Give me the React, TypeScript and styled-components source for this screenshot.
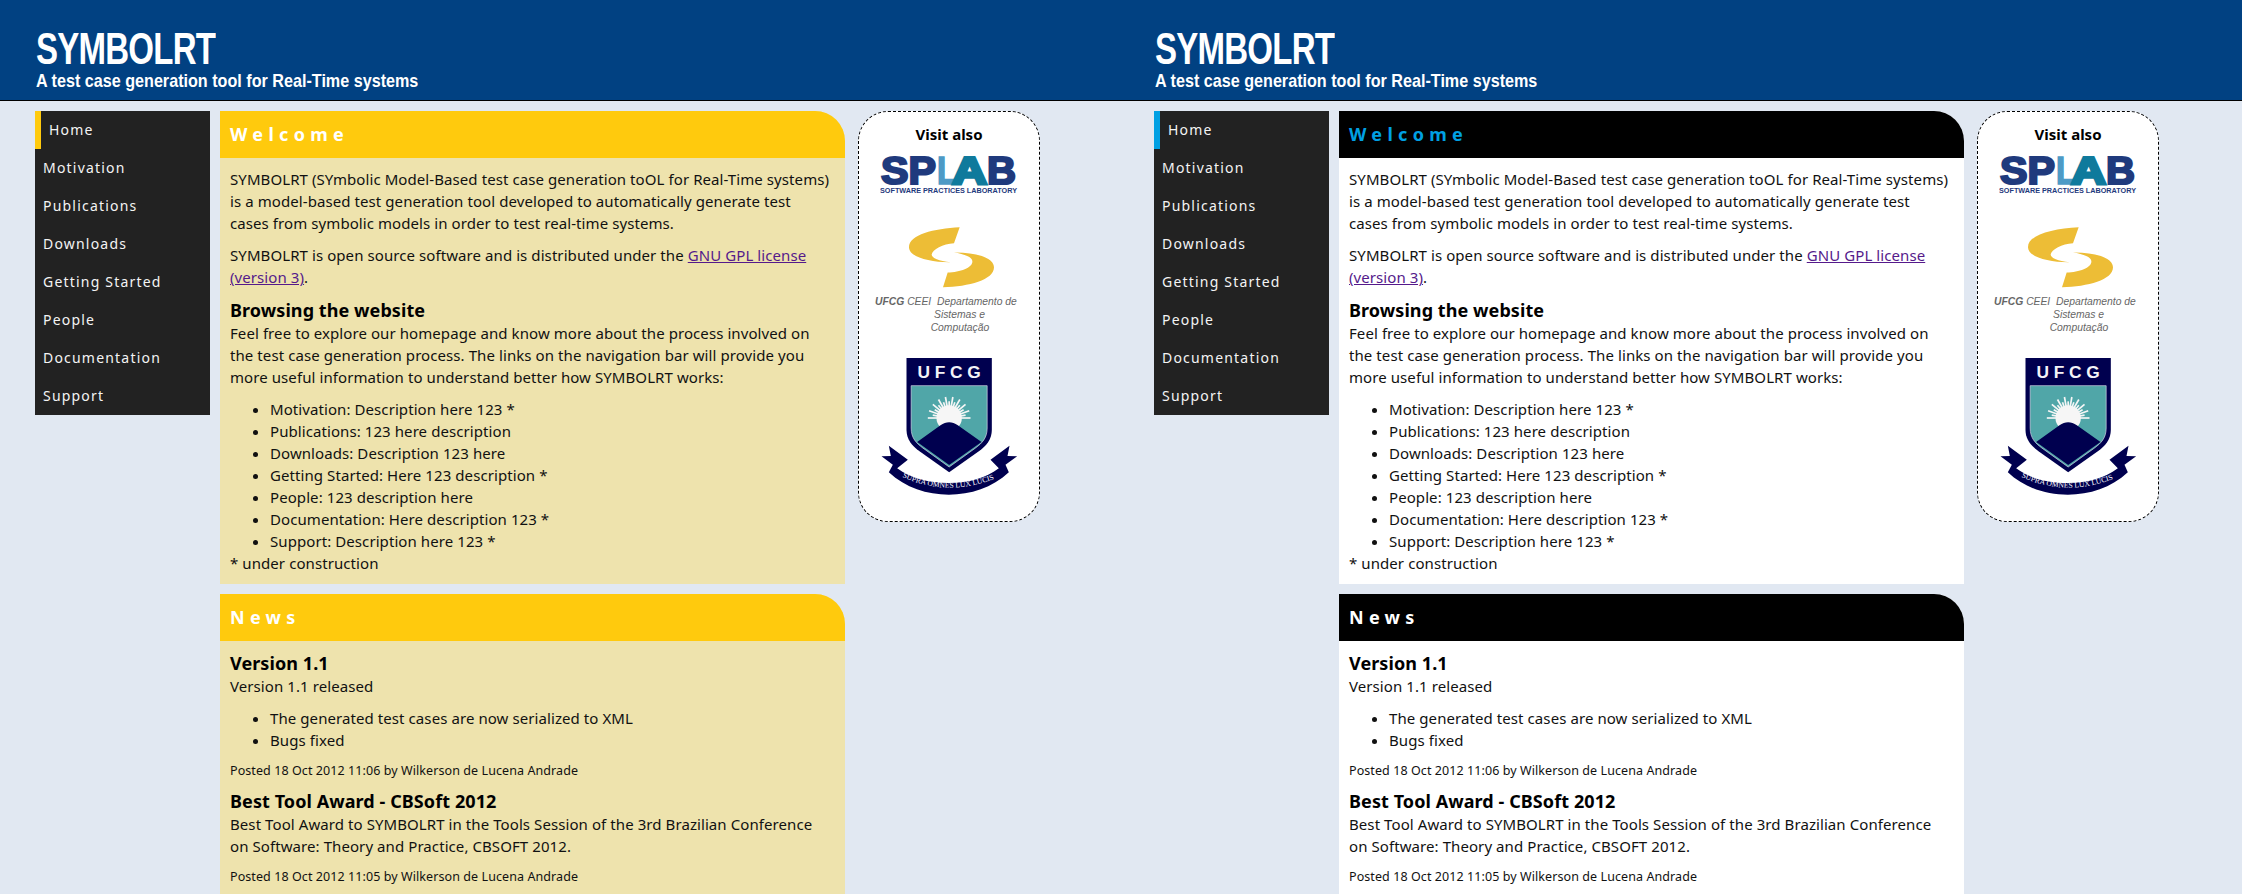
import React, { useId } from "react";
import styled, { createGlobalStyle } from "styled-components";

type Scheme = {
  accent: string;
  headBg: string;
  welcomeColor: string;
  panelBg: string;
};

const yellowScheme: Scheme = {
  accent: "#ffca0d",
  headBg: "#ffca0d",
  welcomeColor: "#ffffff",
  panelBg: "#eee3ad",
};

const blackScheme: Scheme = {
  accent: "#00a0e3",
  headBg: "#000000",
  welcomeColor: "#00a0e3",
  panelBg: "#ffffff",
};

const NAV_ITEMS = [
  "Home",
  "Motivation",
  "Publications",
  "Downloads",
  "Getting Started",
  "People",
  "Documentation",
  "Support",
];

const SECTIONS = [
  "Motivation: Description here 123 *",
  "Publications: 123 here description",
  "Downloads: Description 123 here",
  "Getting Started: Here 123 description *",
  "People: 123 description here",
  "Documentation: Here description 123 *",
  "Support: Description here 123 *",
];

const SplabLetters = ({
  x,
  width,
  color,
  weight,
  children,
}: {
  x: number;
  width: number;
  color: string;
  weight: number;
  children: React.ReactNode;
}) => (
  <text
    x={x}
    y={28}
    textLength={width}
    lengthAdjust="spacingAndGlyphs"
    fontFamily="'Liberation Sans', sans-serif"
    fontWeight={700}
    fontSize={38}
    fill={color}
    stroke={color}
    strokeWidth={weight}
  >
    {children}
  </text>
);

const SplabLogo = () => (
  <LogoSvg width={138} height={38} viewBox="0 0 138 38">
    <SplabLetters x={1} width={55} color="#1f3a7d" weight={2.2}>SP</SplabLetters>
    <SplabLetters x={57} width={20} color="#4d9ac6" weight={1.6}>L</SplabLetters>
    <SplabLetters x={72} width={35} color="#0f7a9c" weight={3}>A</SplabLetters>
    <SplabLetters x={107} width={29} color="#1f3a7d" weight={2.2}>B</SplabLetters>
    <text
      x={0}
      y={37}
      textLength={137}
      lengthAdjust="spacingAndGlyphs"
      fontFamily="'Liberation Sans', sans-serif"
      fontWeight={700}
      fontSize={8}
      fill="#1f3a7d"
    >
      SOFTWARE PRACTICES LABORATORY
    </text>
  </LogoSvg>
);

const CeeiLogo = () => (
  <CeeiSvg width={150} height={107} viewBox="105 380 450 320">
    <path
      d="M362 380C285 384 210 402 210 440C210 470 275 486 335 485C300 482 278 472 278 462C280 447 312 430 345 428Z"
      fill="#edbd36"
    />
    <path
      d="M312 560C390 558 465 538 465 500C465 472 410 455 345 456C375 460 400 470 400 482C402 500 365 515 326 516Z"
      fill="#edbd36"
    />
    <CeeiText x={108} y={612}>
      <tspan fontWeight={700}>UFCG</tspan> CEEI{"  "}Departamento de
    </CeeiText>
    <CeeiText x={285} y={652}>Sistemas e</CeeiText>
    <CeeiText x={275} y={692}>Computação</CeeiText>
  </CeeiSvg>
);

const CeeiText = styled.text`
  font-family: "Liberation Sans", sans-serif;
  font-style: italic;
  font-size: 31px;
  fill: #666;
  white-space: pre;
`;

const SUN_RAYS = Array.from({ length: 19 }, (_, i) => -180 + i * 10);

const UfcgShield = () => {
  const curveId = useId();
  return (
    <ShieldSvg width={137} height={138} viewBox="117 55 410 414">
      <path
        d="M193 55H449V270C449 300 432 318 410 335L321 398L232 335C210 318 193 300 193 270Z"
        fill="#00004f"
      />
      <path
        d="M207 138H435V265C435 295 420 310 400 325L321 382L242 325C222 310 207 295 207 265Z"
        fill="#50a6a8"
        stroke="#d8d8e8"
        strokeWidth={2}
      />
      {SUN_RAYS.map((deg) => {
        const rad = (deg * Math.PI) / 180;
        const len = deg % 20 === 0 ? 64 : 50;
        return (
          <line
            key={deg}
            x1={321}
            y1={235}
            x2={321 + Math.cos(rad) * len}
            y2={235 + Math.sin(rad) * len}
            stroke="#f6f6f6"
            strokeWidth={5}
          />
        );
      })}
      <circle cx={321} cy={235} r={38} fill="#f6f6f6" />
      <path
        d="M225 307L295 257C312 245 330 245 347 257L418 307L321 376Z"
        fill="#00004f"
      />
      <text
        x={226}
        y={115}
        textLength={190}
        fontFamily="'Liberation Sans', sans-serif"
        fontWeight={700}
        fontSize={52}
        fill="#f4f4f8"
      >
        UFCG
      </text>
      <path
        d="M118 350L146 349L140 318L197 360L165 386C205 416 260 430 320 430C380 430 430 416 470 386L445 360L502 318L496 349L525 350L490 375L500 398C450 445 385 465 320 465C255 465 190 445 140 398L152 375Z"
        fill="#00004f"
      />
      <path id={curveId} d="M180 412Q320 476 472 412" fill="none" />
      <text fontFamily="'Liberation Serif', serif" fontSize={23} fill="#ffffff">
        <textPath href={`#${curveId}`}>SUPRA OMNES LUX LUCIS</textPath>
      </text>
    </ShieldSvg>
  );
};

const Site = ({ scheme, width }: { scheme: Scheme; width: number }) => (
  <SiteColumn $width={width}>
    <Banner>
      <Title>SYMBOLRT</Title>
      <Tagline>A test case generation tool for Real-Time systems</Tagline>
    </Banner>
    <Main>
      <Nav>
        {NAV_ITEMS.map((item, i) => (
          <NavItem key={item} $active={i === 0} $accent={scheme.accent}>
            {item}
          </NavItem>
        ))}
      </Nav>
      <Content>
        <Panel $bg={scheme.panelBg}>
          <PanelHead $bg={scheme.headBg} $color={scheme.welcomeColor}>Welcome</PanelHead>
          <PanelBody>
            <Para>
              SYMBOLRT (SYmbolic Model-Based test case generation toOL for Real-Time systems)
              <br />
              is a model-based test generation tool developed to automatically generate test
              <br />
              cases from symbolic models in order to test real-time systems.
            </Para>
            <Para>
              SYMBOLRT is open source software and is distributed under the{" "}
              <TextLink href="#">
                GNU GPL license
                <br />
                (version 3)
              </TextLink>
              .
            </Para>
            <SubHead>Browsing the website</SubHead>
            <PlainText>
              Feel free to explore our homepage and know more about the process involved on
              <br />
              the test case generation process. The links on the navigation bar will provide you
              <br />
              more useful information to understand better how SYMBOLRT works:
            </PlainText>
            <Bullets>
              {SECTIONS.map((s) => (
                <li key={s}>{s}</li>
              ))}
            </Bullets>
            <PlainText>* under construction</PlainText>
          </PanelBody>
        </Panel>
        <Panel $bg={scheme.panelBg}>
          <PanelHead $bg={scheme.headBg} $color="#ffffff">News</PanelHead>
          <PanelBody>
            <SubHead>Version 1.1</SubHead>
            <PlainText>Version 1.1 released</PlainText>
            <Bullets>
              <li>The generated test cases are now serialized to XML</li>
              <li>Bugs fixed</li>
            </Bullets>
            <Posted>Posted 18 Oct 2012 11:06 by Wilkerson de Lucena Andrade</Posted>
            <SubHead>Best Tool Award - CBSoft 2012</SubHead>
            <PlainText>
              Best Tool Award to SYMBOLRT in the Tools Session of the 3rd Brazilian Conference
              <br />
              on Software: Theory and Practice, CBSOFT 2012.
            </PlainText>
            <Posted>Posted 18 Oct 2012 11:05 by Wilkerson de Lucena Andrade</Posted>
          </PanelBody>
        </Panel>
      </Content>
      <VisitBox>
        <VisitTitle>Visit also</VisitTitle>
        <SplabLogo />
        <CeeiLogo />
        <UfcgShield />
      </VisitBox>
    </Main>
  </SiteColumn>
);

export default function App() {
  return (
    <>
      <GlobalStyle />
      <Screen>
        <Site scheme={yellowScheme} width={1119} />
        <Site scheme={blackScheme} width={1123} />
      </Screen>
    </>
  );
}

const GlobalStyle = createGlobalStyle`
  html, body {
    margin: 0;
    padding: 0;
    background: #e1e8f2;
  }
`;

const Screen = styled.div`
  display: flex;
  width: 2242px;
  height: 894px;
  overflow: hidden;
  font-family: "Noto Sans", sans-serif;
  font-size: 15px;
  line-height: 22px;
  color: #111;
`;

const SiteColumn = styled.div<{ $width: number }>`
  flex: none;
  width: ${(p) => p.$width}px;
`;

const Banner = styled.header`
  box-sizing: border-box;
  height: 101px;
  padding: 28px 0 0 36px;
  background: #014182;
  border-bottom: 1px solid #000;
  color: #fff;
  font-family: "Liberation Sans", sans-serif;
  font-weight: 700;
`;

const Title = styled.div`
  font-size: 44px;
  line-height: 42px;
  letter-spacing: -1px;
  transform: scaleX(0.75);
  transform-origin: left;
`;

const Tagline = styled.div`
  margin-top: 1px;
  font-size: 19px;
  line-height: 20px;
  white-space: nowrap;
  transform: scaleX(0.85);
  transform-origin: left;
`;

const Main = styled.div`
  display: flex;
  align-items: flex-start;
  padding: 10px 0 0 35px;
`;

const Nav = styled.nav`
  flex: none;
  width: 175px;
  margin-right: 10px;
  background: #222;
`;

const NavItem = styled.div<{ $active: boolean; $accent: string }>`
  height: 38px;
  padding-left: 8px;
  border-left: ${(p) => (p.$active ? `6px solid ${p.$accent}` : "0")};
  color: #f4f4f4;
  font-size: 14px;
  line-height: 38px;
  letter-spacing: 1.2px;
`;

const Content = styled.div`
  flex: none;
  display: flex;
  flex-direction: column;
  gap: 10px;
  width: 625px;
`;

const Panel = styled.section<{ $bg: string }>`
  background: ${(p) => p.$bg};
  border-top-right-radius: 30px;
`;

const PanelHead = styled.h2<{ $bg: string; $color: string }>`
  height: 47px;
  margin: 0;
  padding-left: 10px;
  background: ${(p) => p.$bg};
  border-top-right-radius: 30px;
  color: ${(p) => p.$color};
  font-size: 18px;
  font-weight: 700;
  line-height: 47px;
  letter-spacing: 5.3px;
`;

const PanelBody = styled.div`
  padding: 10px 5px 10px 10px;
  letter-spacing: 0.08px;
`;

const Para = styled.p`
  margin: 0 0 10px;
`;

const PlainText = styled.div``;

const TextLink = styled.a`
  color: #551a8b;
`;

const SubHead = styled.h3`
  margin: 0;
  font-size: 18px;
  font-weight: 700;
  line-height: 24px;
  color: #000;
`;

const Bullets = styled.ul`
  margin: 10px 0 0;
  padding-left: 40px;
`;

const Posted = styled.div`
  margin: 10px 0 8px;
  font-size: 12.5px;
  line-height: 20px;
`;

const VisitBox = styled.aside`
  flex: none;
  box-sizing: border-box;
  display: flex;
  flex-direction: column;
  align-items: center;
  width: 182px;
  height: 411px;
  margin-left: 13px;
  padding-top: 11px;
  background: #fff;
  border: 1px dashed #000;
  border-radius: 30px;
`;

const VisitTitle = styled.div`
  font-weight: 700;
  font-size: 15px;
  line-height: 22px;
  color: #000;
`;

const LogoSvg = styled.svg`
  display: block;
  margin-top: 11px;
`;

const CeeiSvg = styled.svg`
  display: block;
  margin-top: 33px;
`;

const ShieldSvg = styled.svg`
  display: block;
  margin-top: 24px;
`;
